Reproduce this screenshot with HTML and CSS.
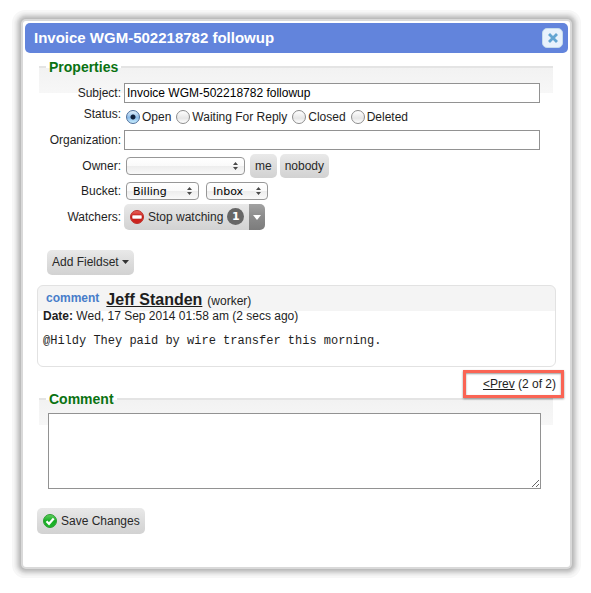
FILE: index.html
```html
<!DOCTYPE html>
<html lang="en">
<head>
<meta charset="utf-8">
<title>Invoice WGM-502218782 followup</title>
<link rel="stylesheet" href="styles.css">
</head>
<body>
<form class="dialog">
  <header class="titlebar">
    <h1>Invoice WGM-502218782 followup</h1>
    <button type="button" class="close" aria-label="Close">
      <svg width="10" height="10" viewBox="0 0 10 10"><path d="M2 2l6 6M8 2L2 8" fill="none" stroke="#62a5d2" stroke-width="2.8" stroke-linecap="square"/></svg>
    </button>
  </header>

  <div class="content">
    <fieldset class="section">
      <legend>Properties</legend>
      <div class="fields">
        <label for="subject">Subject:</label>
        <input class="text" id="subject" type="text" value="Invoice WGM-502218782 followup">

        <span class="top" id="status-label">Status:</span>
        <div class="radios" role="radiogroup" aria-labelledby="status-label">
          <label><input type="radio" name="status" checked>Open</label>
          <label><input type="radio" name="status">Waiting For Reply</label>
          <label><input type="radio" name="status">Closed</label>
          <label><input type="radio" name="status">Deleted</label>
        </div>

        <label for="org">Organization:</label>
        <input class="text" id="org" type="text">

        <label for="owner">Owner:</label>
        <div class="controls">
          <span class="select owner"><select id="owner"><option></option></select><svg width="5" height="8" viewBox="0 0 5 8"><path d="M2.500 0L5 3H0zM2.500 8L0 5h5z" fill="#4a4a4a"/></svg></span>
          <button type="button" class="btn small">me</button>
          <button type="button" class="btn small">nobody</button>
        </div>

        <label for="bucket">Bucket:</label>
        <div class="controls buckets">
          <span class="select group"><select id="bucket"><option>Billing</option></select><svg width="5" height="8" viewBox="0 0 5 8"><path d="M2.500 0L5 3H0zM2.500 8L0 5h5z" fill="#4a4a4a"/></svg></span>
          <span class="select inbox"><select aria-label="Folder"><option>Inbox</option></select><svg width="5" height="8" viewBox="0 0 5 8"><path d="M2.500 0L5 3H0zM2.500 8L0 5h5z" fill="#4a4a4a"/></svg></span>
        </div>

        <span>Watchers:</span>
        <div class="split">
          <button type="button" class="btn watch">
            <svg width="14" height="14" viewBox="0 0 14 14"><defs><linearGradient id="red" x1="0" y1="0" x2="0" y2="1"><stop offset="0" stop-color="#e8675e"/><stop offset=".5" stop-color="#d01d18"/><stop offset="1" stop-color="#c92620"/></linearGradient></defs><circle cx="7" cy="7" r="6.500" fill="url(#red)" stroke="#bd302a"/><rect x="2" y="5" width="10" height="4" rx="1" fill="#fff" stroke="#b5201a" stroke-width=".6"/></svg>
            <span>Stop watching</span>
            <span class="count">1</span>
          </button>
          <button type="button" class="more" aria-label="Show watchers"><svg width="8" height="5" viewBox="0 0 8 5"><path d="M0 0h8L4 5z" fill="#fff"/></svg></button>
        </div>
      </div>
    </fieldset>

    <button type="button" class="btn add"><span>Add Fieldset</span><svg width="7" height="4" viewBox="0 0 7 4"><path d="M0 0h7L3.500 4z" fill="#333"/></svg></button>

    <article class="card">
      <div class="card-head">
        <span class="kind">comment</span>
        <a class="author" href="#">Jeff Standen</a>
        <span>(worker)</span>
      </div>
      <div class="date"><b>Date:</b> Wed, 17 Sep 2014 01:58 am (2 secs ago)</div>
      <pre>@Hildy They paid by wire transfer this morning.</pre>
    </article>

    <nav class="pager"><span class="pages"><a href="#">&lt;Prev</a> (2 of 2)</span></nav>

    <fieldset class="section">
      <legend>Comment</legend>
      <textarea aria-label="Comment"></textarea>
    </fieldset>

    <button type="submit" class="btn save">
      <svg width="14" height="14" viewBox="0 0 14 14"><defs><linearGradient id="green" x1="0" y1="0" x2="0" y2="1"><stop offset="0" stop-color="#62cf60"/><stop offset=".5" stop-color="#16ad24"/><stop offset="1" stop-color="#20b52c"/></linearGradient></defs><circle cx="7" cy="7" r="6.500" fill="url(#green)" stroke="#2d9d32"/><path d="M3.500 7.300l2.500 2.500 4.700-5.300" fill="none" stroke="#fff" stroke-width="2.200"/></svg>
      <span>Save Changes</span>
    </button>
  </div>
</form>
</body>
</html>
```
FILE: styles.css
```css
* { box-sizing: border-box; }

body {
  margin: 0;
  padding: 19px 19px 23px 21px;
  background: #fff;
  color: #1e1e1e;
  font: 12px/14px "Liberation Sans", Arial, sans-serif;
}

button, input, select, textarea { font: inherit; color: inherit; margin: 0; }
svg { display: block; flex: none; }

.dialog {
  border: 2px solid #d9d9d9;
  border-radius: 5px;
  padding: 2px 2px 33px;
  background: #fff;
  box-shadow:
    0 0 0 1px #bcbcbc,
    0 0 0 2px #c4c4c4,
    0 0 0 3px #cecece,
    0 0 0 4px #d8d8d8,
    0 0 0 5px #e2e2e2,
    0 0 0 6px #ebebeb,
    0 0 0 7px #f1f1f1,
    0 0 0 9px #f7f7f7;
}

.titlebar {
  display: flex;
  align-items: center;
  justify-content: space-between;
  height: 30px;
  padding: 0 5px 0 9px;
  border-radius: 5px;
  background: #6284dc;
}
.titlebar h1 { margin: 0; color: #fff; font-size: 15px; line-height: 18px; }
.close {
  display: grid;
  place-items: center;
  width: 21px;
  height: 20px;
  padding: 0;
  border: 1px solid #c5dbec;
  border-radius: 5px;
  background: #e8f2fc;
}

.content { padding: 5px 12px 0; }

.section {
  min-width: 0;
  margin: 0 3px 0 2px;
  padding: 0 12px 0 9px;
  border: 0;
  border-top: 2px solid #e4e4e4;
  background: linear-gradient(#f2f2f2, #f7f7f7) 0 0 / 100% 25px no-repeat;
}
.section legend {
  margin: 0 0 0 -2px;
  padding: 0 3px;
  color: #0a7212;
  font-size: 14px;
  font-weight: bold;
  line-height: 18px;
}

.fields {
  display: grid;
  grid-template-columns: 73px 1fr;
  gap: 4px 3px;
  align-items: center;
  padding: 7px 1px 0 0;
}
.fields > label, .fields > span { text-align: right; white-space: nowrap; }
.fields > .top { align-self: start; }

.text {
  width: 100%;
  height: 20px;
  padding: 0 2px;
  border: 1px solid #929292;
  background: #fff;
  color: #000;
}

.radios { display: flex; gap: 5px; height: 19px; padding: 1px 0 0 2px; }
.radios label { display: flex; align-items: center; gap: 2px; }
.radios input {
  appearance: none;
  width: 14px;
  height: 14px;
  border: 1px solid #8c8c8c;
  border-radius: 50%;
  background: linear-gradient(#fff, #e6e6e6 60%, #fff);
}
.radios input:checked {
  border-color: #4d6f9c;
  background:
    radial-gradient(circle, #10203c 2px, transparent 3px),
    linear-gradient(#e3f0fb, #8cbcea 55%, #c8eeff);
}

.controls { display: flex; align-items: center; gap: 3px; padding-left: 2px; }
.buckets { gap: 7px; }

.select { position: relative; display: flex; }
.select select {
  appearance: none;
  width: 100%;
  height: 18px;
  padding: 1px 18px 0 6px;
  border: 1px solid #979797;
  border-radius: 4px;
  background: linear-gradient(#fff, #fafafa 50%, #ededed 52%, #f9f9f9);
  color: #000;
  font: 11px/14px "DejaVu Sans", sans-serif;
}
.select svg { position: absolute; right: 7px; top: 5px; pointer-events: none; }
.owner { width: 119px; margin-right: 2px; }
.group { width: 73px; }
.inbox { width: 62px; }

.btn {
  display: flex;
  align-items: center;
  gap: 4px;
  height: 26px;
  padding: 0 5px 1px;
  border: 0;
  border-radius: 5px;
  background: linear-gradient(#e9e9e9, #dcdcdc 52%, #d2d2d2);
  color: #282828;
  white-space: nowrap;
}
.small { height: 24px; }

.split { display: flex; }
.watch { border-radius: 5px 0 0 5px; padding-left: 6px; }
.count {
  width: 17px;
  height: 17px;
  border-radius: 50%;
  background: #666;
  color: #fff;
  font-family: "DejaVu Sans", sans-serif;
  font-size: 11px;
  font-weight: bold;
  line-height: 17px;
  text-align: center;
}
.more {
  display: grid;
  place-items: center;
  width: 16px;
  padding: 0;
  border: 0;
  border-radius: 0 5px 5px 0;
  background: linear-gradient(#a2a2a2, #8b8b8b 50%, #7c7c7c);
}

.add { margin: 20px 0 0 10px; height: 25px; gap: 3px; }

.card {
  height: 82px;
  margin-top: 10px;
  padding: 0 5px;
  border: 1px solid #e2e2e2;
  border-radius: 6px;
  background: linear-gradient(#f4f4f4, #f4f4f4) 0 0 / 100% 25px no-repeat;
}
.card-head { display: flex; align-items: baseline; gap: 5px; height: 23px; padding: 5px 0 0 3px; }
.kind { align-self: flex-start; margin-right: 2px; color: #477dca; font-weight: bold; }
.author { color: inherit; font-size: 16px; font-weight: bold; line-height: 18px; }
.card pre { margin: 11px 0 0; font: 12px/14px "Liberation Mono", monospace; }

.pager { display: flex; justify-content: flex-end; height: 13px; margin: 10px 0 0; }
.pager a { color: inherit; }
.pages { position: relative; }
.pages::after {
  content: "";
  position: absolute;
  inset: -7px -8px -8px -20px;
  border: 3px solid #fa6454;
  box-shadow: 0 1px 2px rgba(0, 0, 0, .4), inset 0 1px 2px rgba(0, 0, 0, .4);
  pointer-events: none;
}

textarea {
  display: block;
  width: 100%;
  height: 76px;
  margin-top: 5px;
  border: 1px solid #929292;
  background: #fff;
}

.save { margin-top: 19px; padding-left: 6px; }
```
